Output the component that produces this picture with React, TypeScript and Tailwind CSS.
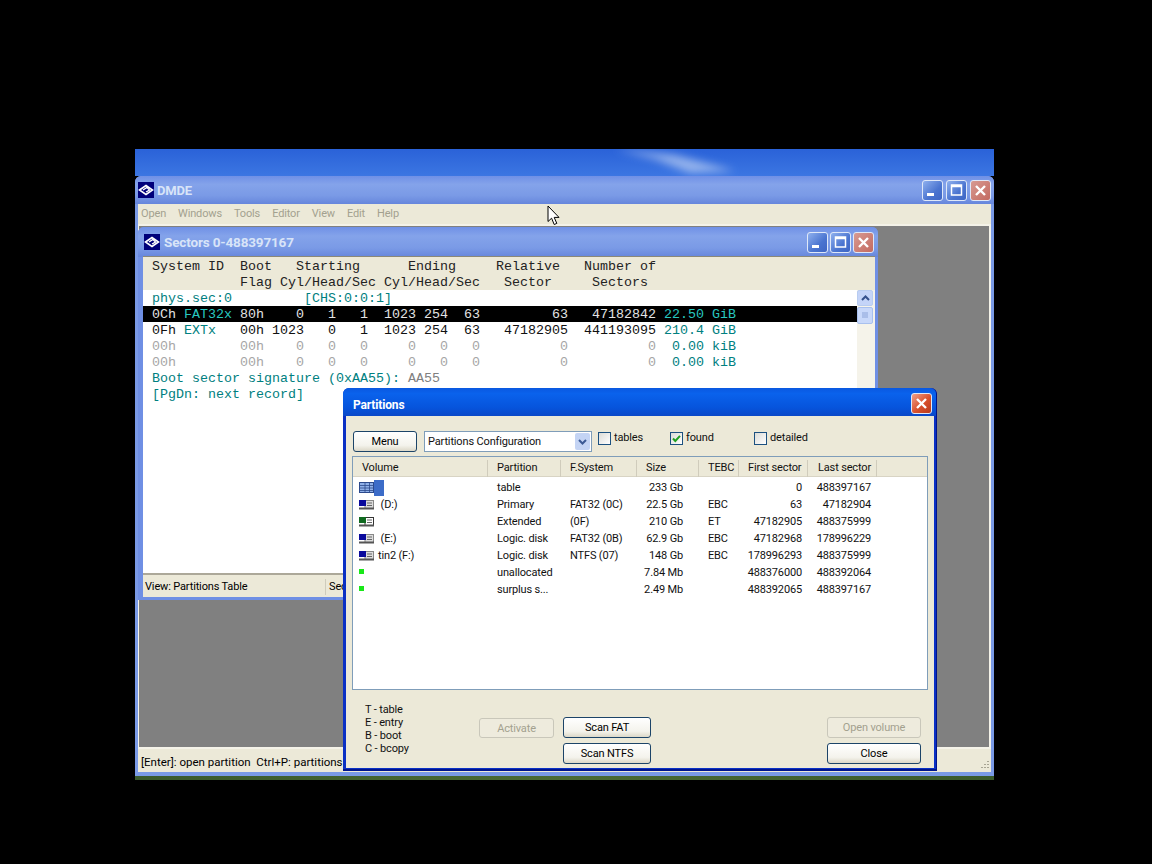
import * as React from "react";

const ui = "font-['Roboto','Liberation_Sans',sans-serif] tracking-[-0.15px]";

const partitions = [
    {icon: "table", volume: "", partition: "table", fs: "", size: "233 Gb", tebc: "", first: "0", last: "488397167"},
    {icon: "blue", volume: " (D:)", partition: "Primary", fs: "FAT32 (0C)", size: "22.5 Gb", tebc: "EBC", first: "63", last: "47182904"},
    {icon: "green", volume: "", partition: "Extended", fs: "(0F)", size: "210 Gb", tebc: "ET", first: "47182905", last: "488375999"},
    {icon: "blue", volume: " (E:)", partition: "Logic. disk", fs: "FAT32 (0B)", size: "62.9 Gb", tebc: "EBC", first: "47182968", last: "178996229"},
    {icon: "blue", volume: "tin2 (F:)", partition: "Logic. disk", fs: "NTFS (07)", size: "148 Gb", tebc: "EBC", first: "178996293", last: "488375999"},
    {icon: "dot", volume: "", partition: "unallocated", fs: "", size: "7.84 Mb", tebc: "", first: "488376000", last: "488392064"},
    {icon: "dot", volume: "", partition: "surplus s...", fs: "", size: "2.49 Mb", tebc: "", first: "488392065", last: "488397167"},
]

const cols = "grid grid-cols-[135px_73px_76px_62px_40px_69px_69px_1fr]"

function Logo() {
    return (
        <svg width="16" height="16" viewBox="0 0 16 16" className="shrink-0">
            <rect width="16" height="16" fill="#00007a"/>
            <path d="M1.5 8 L8 3.5 L14.5 8 L8 12.5 Z" fill="none" stroke="#fff" strokeWidth="1.6"/>
            <path d="M5 8 L9 5.5 L11.5 8 L8 10" fill="none" stroke="#fff" strokeWidth="1.4"/>
        </svg>
    )
}

function WinButton({kind, active}: { kind: "min" | "max" | "close", active?: boolean }) {
    const bg = kind === "close"
        ? (active ? "bg-[linear-gradient(135deg,#f0a08a,#d8502c_55%,#b83a1c)]" : "bg-[linear-gradient(135deg,#d79a92,#c46a60)]")
        : "bg-[linear-gradient(135deg,#8fb0ee,#4a74d0_60%,#3f66c4)]"
    return (
        <div className={"w-[21px] h-[21px] rounded-[3px] border border-[#dfe8f8] flex items-center justify-center " + bg}>
            <svg width="15" height="15" viewBox="0 0 15 15">
                {kind === "min" && <rect x="2" y="10" width="7" height="3" fill="#fff"/>}
                {kind === "max" && <path d="M2.5 2h10v10h-10z M2.5 3.5h10" fill="none" stroke="#fff" strokeWidth="1.5"/>}
                {kind === "close" && <path d="M3 3l9 9M12 3l-9 9" stroke="#fff" strokeWidth="2.4"/>}
            </svg>
        </div>
    )
}

function XpButton({label, disabled, className}: { label: string, disabled?: boolean, className?: string }) {
    return (
        <div className={(disabled
            ? "border-[#c9c7ba] text-[#a3a18f] bg-[#eeebdd] "
            : "border-[#1c4468] text-black bg-[linear-gradient(180deg,#ffffff,#f4f3ec_70%,#dcd8c8)] ")
            + "border rounded-[3px] flex items-center justify-center pt-[2px] text-[11px] " + className}>
            {label}
        </div>
    )
}

function Check({label, checked, className}: { label: string, checked?: boolean, className?: string }) {
    return (
        <div className={"flex items-center gap-[3px] text-[11px] " + className}>
            <div className="w-[13px] h-[13px] border border-[#1c5180] bg-[linear-gradient(135deg,#dcdcd7,#ffffff)] flex items-center justify-center">
                {checked && <svg width="11" height="11" viewBox="0 0 11 11"><path d="M2 5.5l2.3 2.5L9 2.8" fill="none" stroke="#21a121" strokeWidth="2"/></svg>}
            </div>
            <span>{label}</span>
        </div>
    )
}

function RowIcon({kind}: { kind: string }) {
    if (kind === "dot") {
        return <div className="w-[5px] h-[5px] bg-[#18e818] ml-[0px] -mt-[3px]"/>
    }
    if (kind === "table") {
        return (
            <div className="flex items-center">
                <svg width="15" height="11" viewBox="0 0 15 11">
                    <rect x="0.5" y="0.5" width="14" height="10" fill="#8fb0e8" stroke="#2c4a8c"/>
                    <path d="M1 3.5h13M1 6h13M1 8.5h13M6 1v9M10.5 1v9" stroke="#2c4a8c" strokeWidth="0.8"/>
                </svg>
                <div className="w-[10px] h-[16px] bg-[#3c6cc8] ml-[0px]"/>
            </div>
        )
    }
    const color = kind === "green" ? "#106a20" : "#0a0a9c"
    return (
        <svg width="15" height="11" viewBox="0 0 15 11">
            <rect x="6" y="1.5" width="8.5" height="8" fill={kind === "green" ? "#fff" : "#dcdcdc"} stroke={kind === "green" ? "#333" : "#888"}/>
            <path d="M8 4h5M8 6.5h5" stroke="#666"/>
            <rect x="0" y="1" width="7" height="6" fill={color}/>
            <rect x="0" y="8.5" width="15" height="2" fill="#555"/>
        </svg>
    )
}

function Cursor() {
    return (
        <svg width="14" height="22" viewBox="0 0 14 22" className="absolute left-[547px] top-[205px]">
            <path d="M1 1v15.5l3.6-3.3 2.6 6.3 2.6-1.1-2.6-6h4.8z" fill="#fff" stroke="#000"/>
        </svg>
    )
}

function Wallpaper() {
    return (
        <svg width="859" height="27" viewBox="0 0 859 27" className="block">
            <defs>
                <linearGradient id="sky" x1="0" x2="0" y1="0" y2="1">
                    <stop offset="0" stopColor="#2a62d8"/>
                    <stop offset="1" stopColor="#3c76e2"/>
                </linearGradient>
                <filter id="blur"><feGaussianBlur stdDeviation="4"/></filter>
            </defs>
            <rect width="859" height="27" fill="url(#sky)"/>
            <path d="M480 0 L540 6 L600 22 L555 24 L520 10 Z" fill="#c8d8f4" opacity="0.65" filter="url(#blur)"/>
        </svg>
    )
}

function Sectors() {
    const teal = "text-[#008080]"
    const gray = "text-[#a6a6a6]"
    const line = "h-[16px] pt-[1px] "
    return (
        <div className="absolute left-[3px] top-[51px] w-[740px] h-[373px] bg-[#6f8fe4] rounded-t-[6px] flex flex-col pl-[5px] pr-[3px] pb-[3px]">
            <div className="h-[30px] -ml-[5px] -mr-[3px] rounded-t-[6px] bg-[linear-gradient(180deg,#6f90e6,#84a3ea_30%,#7a9ae6_70%,#6686dc)] flex items-center pl-[6px] pr-[4px] shrink-0">
                <Logo/>
                <span className={"ml-[4px] text-[13.5px] font-bold text-[#d8e4f8] " + ui}>Sectors 0-488397167</span>
                <div className="ml-auto flex gap-[2px]">
                    <WinButton kind="min"/>
                    <WinButton kind="max"/>
                    <WinButton kind="close"/>
                </div>
            </div>
            <div className="flex-1 flex flex-col bg-white min-h-0">
                <div className="font-['Liberation_Mono',monospace] text-[13.33px] leading-[16px] whitespace-pre flex-1 flex flex-col min-h-0">
                    <div className="bg-[#ece9d8] pl-[9px] pt-[1px] text-[#222] border-t border-[#8a8878] -mt-[1px]">
                        <div className={line}>{"System ID  Boot   Starting      Ending     Relative   Number of"}</div>
                        <div className={line}>{"           Flag Cyl/Head/Sec Cyl/Head/Sec   Sector     Sectors"}</div>
                    </div>
                    <div className="flex flex-1 min-h-0">
                        <div className="flex-1 min-w-0">
                            <div className={line + "pl-[9px] " + teal}>{"phys.sec:0         [CHS:0:0:1]"}</div>
                            <div className={line + "pl-[9px] bg-black text-[#e4e4e4]"}>
                                {"0Ch "}<span className="text-[#28c8c0]">FAT32x</span>{" 80h    0   1   1  1023 254  63         63   47182842 "}<span className="text-[#28c8c0]">{"22.50 GiB"}</span>
                            </div>
                            <div className={line + "pl-[9px] text-[#111]"}>
                                {"0Fh "}<span className={teal}>EXTx</span>{"   00h 1023   0   1  1023 254  63   47182905  441193095 "}<span className={teal}>{"210.4 GiB"}</span>
                            </div>
                            <div className={line + "pl-[9px] " + gray}>
                                {"00h        00h    0   0   0     0   0   0          0          0  "}<span className={teal}>{"0.00 kiB"}</span>
                            </div>
                            <div className={line + "pl-[9px] " + gray}>
                                {"00h        00h    0   0   0     0   0   0          0          0  "}<span className={teal}>{"0.00 kiB"}</span>
                            </div>
                            <div className={line + "pl-[9px] " + teal}>{"Boot sector signature (0xAA55): "}<span className="text-[#808080]">AA55</span></div>
                            <div className={line + "pl-[9px] " + teal}>{"[PgDn: next record]"}</div>
                        </div>
                        <div className="w-[18px] pr-[2px] bg-[#f5f3ea] flex flex-col shrink-0">
                            <div className="h-[16px] rounded-[2px] border border-[#b8ccf0] bg-[#c4d4f8] flex items-center justify-center">
                                <svg width="9" height="6" viewBox="0 0 9 6"><path d="M1 5l3.5-3.5L8 5" fill="none" stroke="#34508c" strokeWidth="2"/></svg>
                            </div>
                            <div className="h-[17px] mt-[1px] rounded-[2px] border border-[#a8c0ee] bg-[#c8d8fa] flex items-center justify-center">
                                <svg width="8" height="7" viewBox="0 0 8 7"><path d="M1 1h6M1 3h6M1 5h6" stroke="#8ca4d8"/></svg>
                            </div>
                        </div>
                    </div>
                </div>
                <div className={"h-[24px] shrink-0 bg-[#ece9d8] border-t-2 border-[#aca899] flex items-center text-[11px] text-black pl-[2px] pt-[2px] " + ui}>
                    <span className="w-[181px] border-r border-[#cfccbc]">View: Partitions Table</span>
                    <span className="pl-[3px]">Sec</span>
                </div>
            </div>
        </div>
    )
}

function Partitions() {
    return (
        <div className={"absolute left-[343px] top-[388px] w-[594px] h-[383px] rounded-t-[6px] bg-[#0a30c4] border-b-2 border-r border-[#00148c] flex flex-col pl-[3px] pr-[2px] pb-[1px] text-[#111] " + ui}>
            <div className="h-[28px] -ml-[3px] -mr-[2px] rounded-t-[6px] bg-[linear-gradient(180deg,#0a58e0,#0a62ec_20%,#0654dc_70%,#0a48c8)] flex items-start pl-[10px] pr-[4px] pt-[5px] shrink-0">
                <span className="mt-[3px] text-[12px] font-bold text-white">Partitions</span>
                <div className="ml-auto"><WinButton kind="close" active/></div>
            </div>
            <div className="flex-1 bg-[#ece9d8] flex flex-col px-[6px] min-h-0">
                <div className="h-[40px] flex items-start pt-[15px] pl-[1px] shrink-0">
                    <XpButton label="Menu" className="w-[64px] h-[21px]"/>
                    <div className="ml-[7px] w-[168px] h-[21px] bg-white border border-[#7f9db9] flex items-center pl-[3px] pr-[1px] text-[11px]">
                        <span className="mt-[1px]">Partitions Configuration</span>
                        <div className="ml-auto w-[15px] h-[17px] rounded-[2px] bg-[#c4d4f4] flex items-center justify-center">
                            <svg width="9" height="6" viewBox="0 0 9 6"><path d="M1 1l3.5 3.5L8 1" fill="none" stroke="#3c5a94" strokeWidth="2"/></svg>
                        </div>
                    </div>
                    <Check label="tables" className="ml-[6px] w-[72px] -mt-[1px]"/>
                    <Check label="found" checked className="w-[84px] -mt-[1px]"/>
                    <Check label="detailed" className="-mt-[1px]"/>
                </div>
                <div className="h-[234px] shrink-0 border border-[#7f9db9] bg-white flex flex-col">
                    <div className={cols + " h-[20px] bg-[#ece9d8] border-b border-[#d8d4c4] text-[11px] items-center whitespace-nowrap pt-[3px] shrink-0"}>
                        <span className="pl-[9px] border-r border-[#d0ccbc]">Volume</span>
                        <span className="pl-[9px] border-r border-[#d0ccbc]">Partition</span>
                        <span className="pl-[9px] border-r border-[#d0ccbc]">F.System</span>
                        <span className="pl-[9px] border-r border-[#d0ccbc]">Size</span>
                        <span className="pl-[9px] border-r border-[#d0ccbc]">TEBC</span>
                        <span className="pl-[9px] border-r border-[#d0ccbc]">First sector</span>
                        <span className="pl-[10px] border-r border-[#d0ccbc]">Last sector</span>
                        <span/>
                    </div>
                    <div className="pt-[2px]">
                        {partitions.map((p, i) => (
                            <div key={i} className={cols + " h-[17px] text-[11px] leading-[17px] items-center whitespace-nowrap"}>
                                <div className="flex items-center pl-[6px] gap-[4px] h-[17px]">
                                    <RowIcon kind={p.icon}/>
                                    <span className="whitespace-pre">{p.volume}</span>
                                </div>
                                <span className="pl-[9px]">{p.partition}</span>
                                <span className="pl-[9px]">{p.fs}</span>
                                <span className="text-right pr-[16px]">{p.size}</span>
                                <span className="pl-[9px]">{p.tebc}</span>
                                <span className="text-right pr-[6px]">{p.first}</span>
                                <span className="text-right pr-[6px]">{p.last}</span>
                                <span/>
                            </div>
                        ))}
                    </div>
                </div>
                <div className="flex-1 flex">
                    <div className="ml-[13px] mt-[13px] text-[11px] leading-[13px] w-[114px]">
                        <div>T - table</div>
                        <div>E - entry</div>
                        <div>B - boot</div>
                        <div>C - bcopy</div>
                    </div>
                    <XpButton label="Activate" disabled className="mt-[28px] w-[75px] h-[20px]"/>
                    <div className="ml-[9px] mt-[27px] flex flex-col gap-[5px]">
                        <XpButton label="Scan FAT" className="w-[88px] h-[21px]"/>
                        <XpButton label="Scan NTFS" className="w-[88px] h-[21px]"/>
                    </div>
                    <div className="ml-[176px] mt-[27px] flex flex-col gap-[5px]">
                        <XpButton label="Open volume" disabled className="w-[94px] h-[21px]"/>
                        <XpButton label="Close" className="w-[94px] h-[21px]"/>
                    </div>
                </div>
            </div>
        </div>
    )
}

export default function App() {
    return (
        <div className="relative w-[1152px] h-[864px] bg-black overflow-hidden">
            <div className="absolute left-[135px] top-[149px] w-[859px] h-[631px] flex flex-col">
                <Wallpaper/>
                <div className="relative flex-1 bg-[#7a9ae6] rounded-t-[6px] flex flex-col px-[3px] pb-[4px] min-h-0">
                    <div className="h-[28px] -mx-[3px] rounded-t-[6px] bg-[linear-gradient(180deg,#6f90e6,#84a3ea_30%,#7a9ae6_70%,#6686dc)] flex items-center pl-[3px] pr-[3px] shrink-0">
                        <Logo/>
                        <span className={"ml-[3px] mt-[2px] text-[13px] font-bold text-[#d8e4f8] " + ui}>DMDE</span>
                        <div className="ml-auto flex gap-[3px]">
                            <WinButton kind="min"/>
                            <WinButton kind="max"/>
                            <WinButton kind="close"/>
                        </div>
                    </div>
                    <div className={"h-[20px] shrink-0 bg-[#ece9d8] flex items-center gap-[12px] pl-[3px] text-[11px] text-[#a3a18f] " + ui}>
                        <span>Open</span>
                        <span>Windows</span>
                        <span>Tools</span>
                        <span>Editor</span>
                        <span>View</span>
                        <span>Edit</span>
                        <span>Help</span>
                    </div>
                    <div className="flex-1 bg-[#808080] border-t-2 border-b-2 border-l border-r-2 border-[#f4f2e8] min-h-0"/>
                    <div className="h-[23px] shrink-0 bg-[#ece9d8] flex items-center pl-[3px] pt-[4px] text-[11.5px] text-black relative font-['Roboto','Liberation_Sans',sans-serif]">
                        <span className="whitespace-pre">[Enter]: open partition  Ctrl+P: partitions c</span>
                        <svg width="12" height="12" viewBox="0 0 12 12" className="absolute right-[1px] bottom-[1px]">
                            <path d="M10 2v1M7 5v1M10 5v1M4 8v1M7 8v1M10 8v1" stroke="#a8a594" strokeWidth="2"/>
                        </svg>
                    </div>
                    <Sectors/>
                </div>
                <div className="h-[4px] shrink-0 bg-[linear-gradient(90deg,#3a5a2c,#4a6a34,#3a5a2c)]"/>
            </div>
            <Partitions/>
            <Cursor/>
        </div>
    )
}
